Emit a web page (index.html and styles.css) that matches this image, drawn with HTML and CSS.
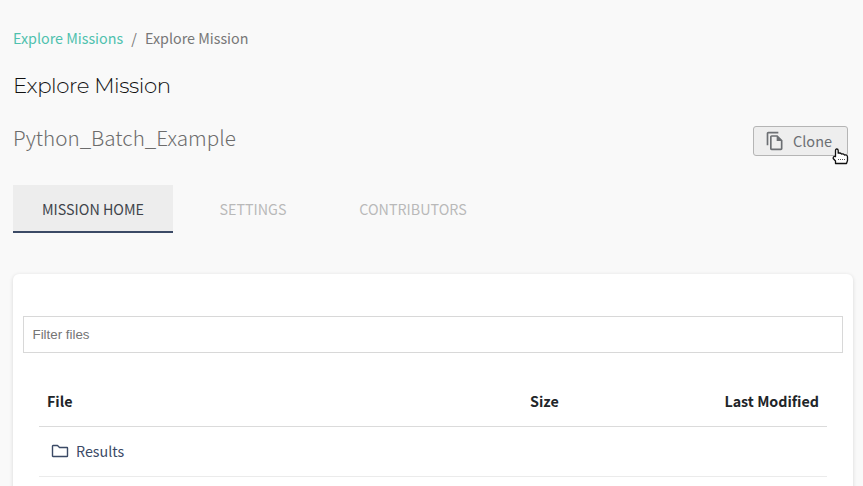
FILE: index.html
```html
<!DOCTYPE html>
<html lang="en">
<head>
<meta charset="utf-8">
<title>Explore Mission</title>
<link rel="stylesheet" href="styles.css">
</head>
<body>
<main class="page">
  <nav class="breadcrumb"><a class="crumb-link">Explore Missions</a><span class="crumb-sep">/</span><span class="crumb-current">Explore Mission</span></nav>
  <h1 class="title">Explore Mission</h1>
  <div class="heading-row">
    <h2 class="mission-name">Python_Batch_Example</h2>
    <button class="clone">
      <svg class="clone-icon" width="20" height="20" viewBox="0 0 24 24"><path fill="currentColor" d="M16 1H4c-1.100 0-2 .9-2 2v14h2V3h12V1zm-1 4H8c-1.100 0-1.990.9-1.990 2L6 21c0 1.100.89 2 1.990 2H19c1.100 0 2-.9 2-2V11l-6-6zM8 21V7h6v5h5v9H8z"/></svg>
      <span class="clone-label">Clone</span>
      <svg class="cursor" width="17" height="17" viewBox="0 0 17 17"><path fill="#fff" stroke="#111" stroke-width="1.300" stroke-linejoin="round" d="M3.500 2.500Q3.500 1 4.800 1T6.200 2.500V5.200Q8.500 4.500 9.500 6Q11.500 5.500 12.500 7Q15.500 6.500 15.500 9V12.500L14.500 15.500H3.500V13L1.200 10.500Q1 8 3.500 8.500Z"/><path fill="none" stroke="#555" stroke-dasharray="1 1" d="M6 11.500H13"/></svg>
    </button>
  </div>
  <div class="tabs">
    <div class="tab tab-active">MISSION HOME</div>
    <div class="tab">SETTINGS</div>
    <div class="tab">CONTRIBUTORS</div>
  </div>
  <section class="card">
    <input class="filter" placeholder="Filter files">
    <div class="table">
      <div class="row head"><span class="file">File</span><span class="size">Size</span><span class="modified">Last Modified</span></div>
      <div class="row entry"><svg class="folder" width="18" height="14" viewBox="0 0 18 14"><path fill="none" stroke="currentColor" stroke-width="1.400" stroke-linejoin="round" d="M1.500 2Q1.500 1.500 2 1.500H6.500L8.500 3.500H16Q16.500 3.500 16.500 4V12Q16.500 12.500 16 12.500H2Q1.500 12.500 1.500 12Z"/></svg><span class="results">Results</span></div>
    </div>
  </section>
</main>
</body>
</html>
```
FILE: styles.css
```css
* { box-sizing: border-box; }
body { margin: 0; background: #f9f9f9; color: #212529; font: 14.300px/24px "Noto Sans CJK SC", sans-serif; overflow: hidden; }
.page { padding: 26px 10px 0 13px; height: 486px; overflow: hidden; }
.breadcrumb { display: flex; height: 24px; color: #777; }
.crumb-link { color: #4fc1ae; width: 110px; white-space: nowrap; }
.crumb-sep { width: 22px; text-align: center; }
.title { margin: 21px 0 0; font: 300 21.300px/28px Montserrat, "Open Sans", sans-serif; letter-spacing: -0.400px; color: #111; }
.heading-row { display: flex; justify-content: space-between; height: 30px; margin-top: 27px; padding-right: 5px; }
.mission-name { margin: -2px 0 0; font: 300 20.650px/26px "Noto Sans CJK SC", sans-serif; color: #6c6c6c; }
.clone { position: relative; width: 95px; height: 30px; border: 1px solid #b5b5b5; border-radius: 3px; background: #eee; color: #6c6f73; display: flex; align-items: center; padding: 0 0 0 11px; gap: 8px; font: 14.500px/20px "Noto Sans CJK SC", sans-serif; }
.cursor { position: absolute; right: -2px; top: 21px; }
.tabs { display: flex; margin-top: 29px; height: 48px; }
.tab { width: 160px; display: flex; justify-content: center; align-items: center; color: #b9b9b9; }
.tab-active { background: #ededed; border-bottom: 2px solid #3b4a66; color: #3f444a; padding-top: 2px; }
.card { margin-top: 41px; height: 260px; background: #fff; border-radius: 6px; padding: 42px 10px; box-shadow: 0 1px 4px #0002; }
.filter { width: 100%; height: 37px; border: 1px solid #d8d8d8; padding: 0 8.500px; font: 13.330px "Liberation Sans", sans-serif; display: block; }
.table { margin: 24px 16px 0; }
.row { display: flex; height: 50px; align-items: center; border-bottom: 1px solid #ebebeb; padding: 0 8px 2px; }
.head { font-weight: 700; border-color: #dbdbdb; }
.file { width: 483px; }
.modified { margin-left: auto; }
.entry { padding-left: 12px; gap: 7px; color: #3b4a66; }
```
